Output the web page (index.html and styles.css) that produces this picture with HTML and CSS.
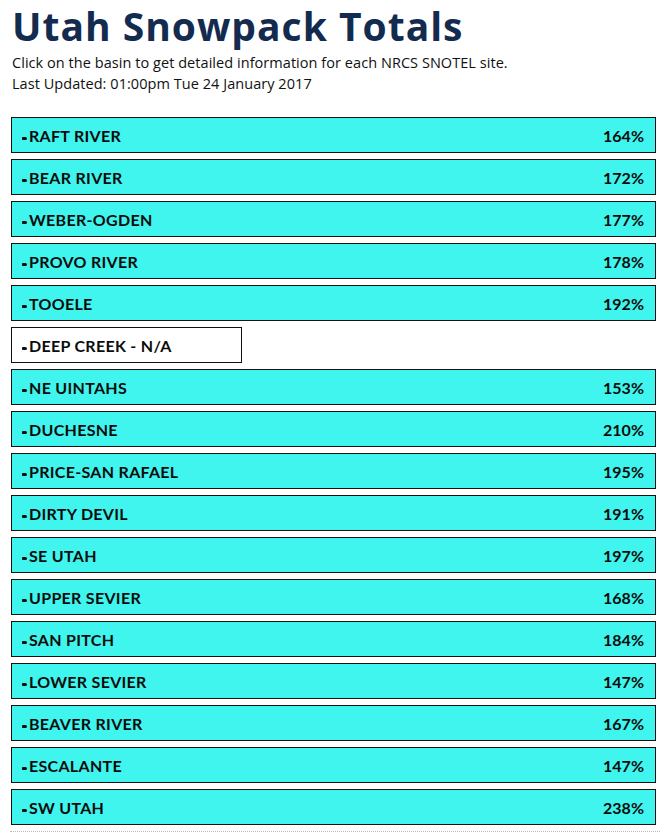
FILE: index.html
```html
<!DOCTYPE html>
<html>
<head>
<meta charset="utf-8">
<link rel="stylesheet" href="styles.css">
</head>
<body>
<div class="page">
  <h1 class="title">Utah Snowpack Totals</h1>
  <p class="sub">Click on the basin to get detailed information for each NRCS SNOTEL site.</p>
  <p class="sub">Last Updated: 01:00pm Tue 24 January 2017</p>
  <div class="list">
    <div class="row"><span class="name"><i class="dot"></i>RAFT RIVER</span><span class="pct">164%</span></div>
    <div class="row"><span class="name"><i class="dot"></i>BEAR RIVER</span><span class="pct">172%</span></div>
    <div class="row"><span class="name"><i class="dot"></i>WEBER-OGDEN</span><span class="pct">177%</span></div>
    <div class="row"><span class="name"><i class="dot"></i>PROVO RIVER</span><span class="pct">178%</span></div>
    <div class="row"><span class="name"><i class="dot"></i>TOOELE</span><span class="pct">192%</span></div>
    <div class="row na"><span class="name"><i class="dot"></i>DEEP CREEK - N/A</span></div>
    <div class="row"><span class="name"><i class="dot"></i>NE UINTAHS</span><span class="pct">153%</span></div>
    <div class="row"><span class="name"><i class="dot"></i>DUCHESNE</span><span class="pct">210%</span></div>
    <div class="row"><span class="name"><i class="dot"></i>PRICE-SAN RAFAEL</span><span class="pct">195%</span></div>
    <div class="row"><span class="name"><i class="dot"></i>DIRTY DEVIL</span><span class="pct">191%</span></div>
    <div class="row"><span class="name"><i class="dot"></i>SE UTAH</span><span class="pct">197%</span></div>
    <div class="row"><span class="name"><i class="dot"></i>UPPER SEVIER</span><span class="pct">168%</span></div>
    <div class="row"><span class="name"><i class="dot"></i>SAN PITCH</span><span class="pct">184%</span></div>
    <div class="row"><span class="name"><i class="dot"></i>LOWER SEVIER</span><span class="pct">147%</span></div>
    <div class="row"><span class="name"><i class="dot"></i>BEAVER RIVER</span><span class="pct">167%</span></div>
    <div class="row"><span class="name"><i class="dot"></i>ESCALANTE</span><span class="pct">147%</span></div>
    <div class="row"><span class="name"><i class="dot"></i>SW UTAH</span><span class="pct">238%</span></div>
  </div>
  <div class="rule"></div>
</div>
</body>
</html>
```
FILE: styles.css
```css
html, body { margin: 0; padding: 0; background: #fff; }
.page {
  padding: 0 6px 0 11px;
  font-family: "Lato", "Open Sans", sans-serif;
}
.title {
  margin: 0;
  padding: 0 0 0 1px;
  font-family: "Open Sans", sans-serif;
  font-size: 39px;
  line-height: 52px;
  font-weight: 700;
  color: #142b50;
  letter-spacing: 1px;
}
.sub {
  margin: 0;
  padding-left: 1px;
  font-family: "Open Sans", sans-serif;
  font-size: 14.5px;
  line-height: 21px;
  letter-spacing: 0.05px;
  color: #111;
}
.list {
  margin-top: 23px;
  display: flex;
  flex-direction: column;
  gap: 6px;
}
.row {
  box-sizing: border-box;
  height: 36px;
  width: 645px;
  background: #3ff5ee;
  border: 1px solid #111;
  display: flex;
  align-items: center;
  justify-content: space-between;
  padding: 0 11px 0 10px;
  font-weight: 700;
  font-size: 16px;
  letter-spacing: 0.3px;
  color: #0c0c0c;
}
.row.na {
  background: #fff;
  width: 231px;
}
.name { display: flex; align-items: center; }
.dot {
  display: inline-block;
  width: 5px;
  height: 3px;
  background: #111;
  border-radius: 1px 2px 2px 1px;
  margin-right: 2px;
  margin-top: 6px;
}
.pct { letter-spacing: 0; }
.rule {
  margin-top: 6px;
  width: 650px;
  margin-left: -1px;
  border-top: 1px dotted #bbb;
}
```
